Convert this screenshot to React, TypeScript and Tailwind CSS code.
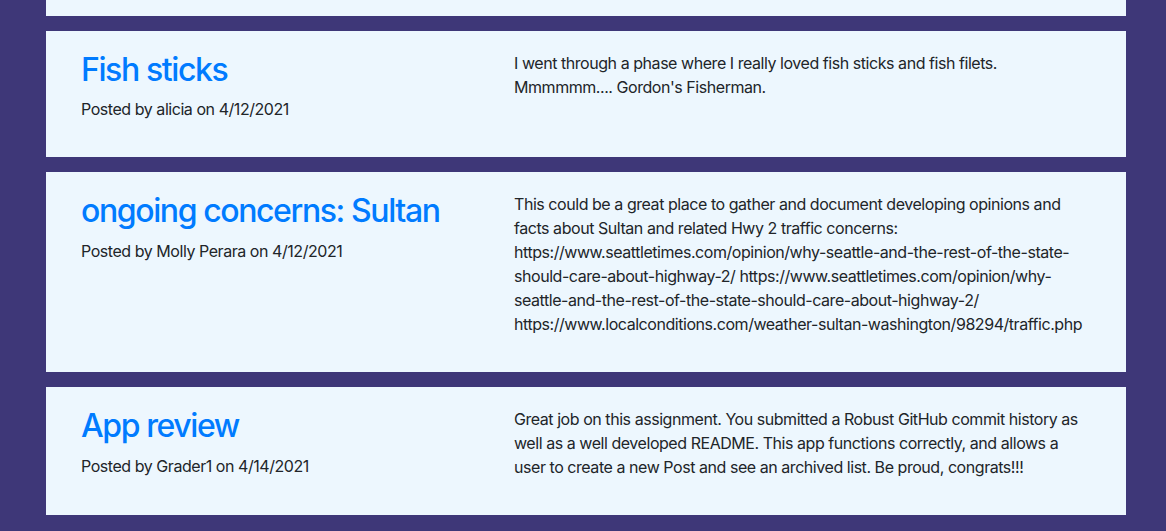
import React from "react";

const posts = [
  {
    title: "Fish sticks",
    author: "alicia",
    date: "4/12/2021",
    body: "I went through a phase where I really loved fish sticks and fish filets. Mmmmmm.... Gordon's Fisherman.",
  },
  {
    title: "ongoing concerns: Sultan",
    author: "Molly Perara",
    date: "4/12/2021",
    body: "This could be a great place to gather and document developing opinions and facts about Sultan and related Hwy 2 traffic concerns: https://www.seattletimes.com/opinion/why-seattle-and-the-rest-of-the-state-should-care-about-highway-2/ https://www.seattletimes.com/opinion/why-seattle-and-the-rest-of-the-state-should-care-about-highway-2/ https://www.localconditions.com/weather-sultan-washington/98294/traffic.php",
  },
  {
    title: "App review",
    author: "Grader1",
    date: "4/14/2021",
    body: "Great job on this assignment. You submitted a Robust GitHub commit history as well as a well developed README. This app functions correctly, and allows a user to create a new Post and see an archived list. Be proud, congrats!!!",
  },
];

function PostCard({ post }: { post: (typeof posts)[number] }) {
  return (
    <div className="bg-[#edf7fe] px-[35px] pt-[20px] pb-[20px] flex gap-[30px]">
      <div className="w-[403px] shrink-0">
        <h2 className="text-[32px] leading-[1.2] font-medium tracking-[-1.4px] text-[#007bff] mb-[8px]">
          {post.title}
        </h2>
        <p className="mb-[16px]">
          Posted by {post.author} on {post.date}
        </p>
      </div>
      <div className="flex-1 min-w-0">
        <p className="mb-[16px] break-words">{post.body}</p>
      </div>
    </div>
  );
}

export default function App() {
  return (
    <div
      className="min-h-[531px] bg-[#3e3778] text-[#212529] text-[16px] leading-[1.5] tracking-[-0.45px]"
      style={{ fontFamily: "Inter, 'Noto Sans', sans-serif" }}
    >
      <div className="ml-[46px] w-[1080px] flex flex-col gap-[15px] pb-[16px]">
        <div className="bg-[#edf7fe] h-[16px]" />
        {posts.map((post) => (
          <PostCard key={post.title} post={post} />
        ))}
      </div>
    </div>
  );
}
